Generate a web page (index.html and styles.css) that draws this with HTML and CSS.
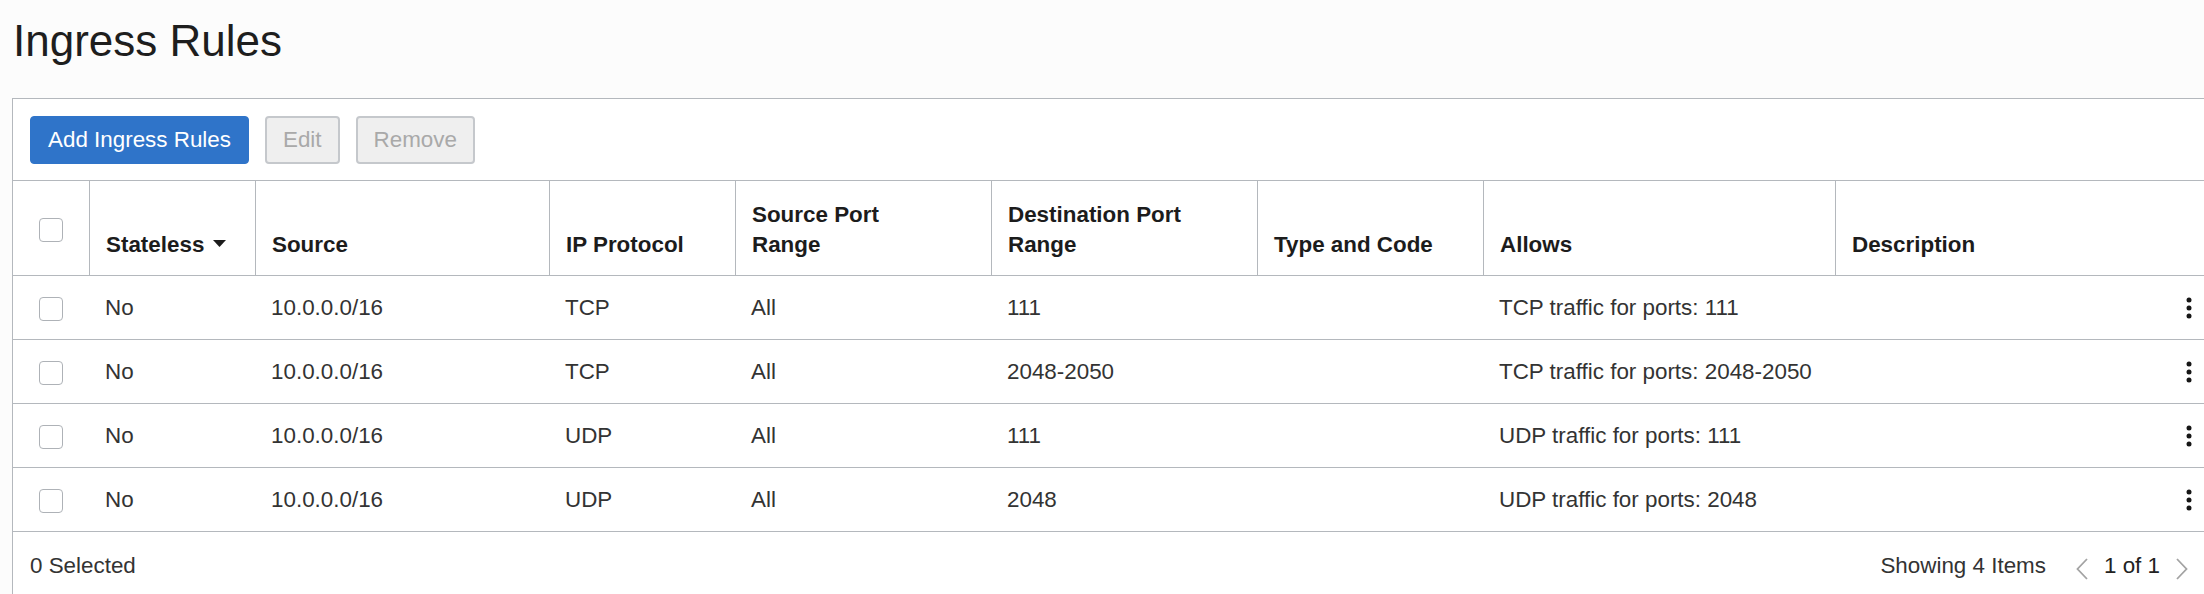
FILE: index.html
```html
<!DOCTYPE html>
<html lang="en">
<head>
<meta charset="utf-8">
<title>Ingress Rules</title>
<link rel="stylesheet" href="styles.css">
</head>
<body>
<div class="page">
  <h1 class="title">Ingress Rules</h1>
  <section class="panel">
    <div class="toolbar">
      <button class="btn btn-primary" type="button">Add Ingress Rules</button>
      <button class="btn btn-disabled" type="button" disabled>Edit</button>
      <button class="btn btn-disabled" type="button" disabled>Remove</button>
    </div>
    <div class="table" role="table">
      <div class="row head" role="row">
        <div class="th th-check" role="columnheader"><span class="checkbox"></span></div>
        <div class="th divided" role="columnheader"><span>Stateless<svg class="sort" width="13" height="7" viewBox="0 0 13 7"><polygon points="0,0 13,0 6.5,7"/></svg></span></div>
        <div class="th divided" role="columnheader">Source</div>
        <div class="th divided" role="columnheader">IP Protocol</div>
        <div class="th divided" role="columnheader"><span>Source Port<br>Range</span></div>
        <div class="th divided" role="columnheader"><span>Destination Port<br>Range</span></div>
        <div class="th divided" role="columnheader">Type and Code</div>
        <div class="th divided" role="columnheader">Allows</div>
        <div class="th divided" role="columnheader">Description</div>
        <div class="th" role="columnheader"></div>
      </div>

      <div class="row" role="row">
        <div class="td td-check"><span class="checkbox"></span></div>
        <div class="td">No</div>
        <div class="td">10.0.0.0/16</div>
        <div class="td">TCP</div>
        <div class="td">All</div>
        <div class="td">111</div>
        <div class="td"></div>
        <div class="td">TCP traffic for ports: 111</div>
        <div class="td"></div>
        <div class="td td-actions"><svg class="kebab" width="6" height="22" viewBox="0 0 6 22"><circle cx="3" cy="3" r="2.5"/><circle cx="3" cy="11" r="2.5"/><circle cx="3" cy="19" r="2.5"/></svg></div>
      </div>

      <div class="row" role="row">
        <div class="td td-check"><span class="checkbox"></span></div>
        <div class="td">No</div>
        <div class="td">10.0.0.0/16</div>
        <div class="td">TCP</div>
        <div class="td">All</div>
        <div class="td">2048-2050</div>
        <div class="td"></div>
        <div class="td">TCP traffic for ports: 2048-2050</div>
        <div class="td"></div>
        <div class="td td-actions"><svg class="kebab" width="6" height="22" viewBox="0 0 6 22"><circle cx="3" cy="3" r="2.5"/><circle cx="3" cy="11" r="2.5"/><circle cx="3" cy="19" r="2.5"/></svg></div>
      </div>

      <div class="row" role="row">
        <div class="td td-check"><span class="checkbox"></span></div>
        <div class="td">No</div>
        <div class="td">10.0.0.0/16</div>
        <div class="td">UDP</div>
        <div class="td">All</div>
        <div class="td">111</div>
        <div class="td"></div>
        <div class="td">UDP traffic for ports: 111</div>
        <div class="td"></div>
        <div class="td td-actions"><svg class="kebab" width="6" height="22" viewBox="0 0 6 22"><circle cx="3" cy="3" r="2.5"/><circle cx="3" cy="11" r="2.5"/><circle cx="3" cy="19" r="2.5"/></svg></div>
      </div>

      <div class="row" role="row">
        <div class="td td-check"><span class="checkbox"></span></div>
        <div class="td">No</div>
        <div class="td">10.0.0.0/16</div>
        <div class="td">UDP</div>
        <div class="td">All</div>
        <div class="td">2048</div>
        <div class="td"></div>
        <div class="td">UDP traffic for ports: 2048</div>
        <div class="td"></div>
        <div class="td td-actions"><svg class="kebab" width="6" height="22" viewBox="0 0 6 22"><circle cx="3" cy="3" r="2.5"/><circle cx="3" cy="11" r="2.5"/><circle cx="3" cy="19" r="2.5"/></svg></div>
      </div>
    </div>
    <div class="footer">
      <span class="selected">0 Selected</span>
      <div class="pager">
        <span class="count">Showing 4 Items</span>
        <svg class="chev" width="12" height="22" viewBox="0 0 12 22"><polyline points="11,1 1.5,11 11,21"/></svg>
        <span class="pages">1 of 1</span>
        <svg class="chev" width="12" height="22" viewBox="0 0 12 22"><polyline points="1,1 10.5,11 1,21"/></svg>
      </div>
    </div>
  </section>
</div>
</body>
</html>
```

FILE: styles.css
```css
* {
  box-sizing: border-box;
}

html, body {
  margin: 0;
  padding: 0;
}

body {
  background: #fcfcfc;
  font-family: "Liberation Sans", Arial, Helvetica, sans-serif;
  color: #333333;
  overflow: hidden;
}

.page {
  padding-top: 15px;
}

.title {
  margin: 0 0 31px 13px;
  font-size: 44px;
  line-height: 52px;
  font-weight: 400;
  color: #1e1e1e;
}

.panel {
  margin-left: 12px;
  background: #ffffff;
  border: 1px solid #b4b8bd;
  border-right: none;
}

.toolbar {
  display: flex;
  gap: 16px;
  padding: 17px 17px 16px;
  border-bottom: 1px solid #b4b8bd;
}

.btn {
  height: 48px;
  padding: 0 17px;
  font-family: inherit;
  font-size: 22.4px;
  border-radius: 4px;
  border: 1px solid transparent;
  line-height: 1;
}

.btn-primary {
  background: #2f74c9;
  border-color: #2f74c9;
  color: #ffffff;
}

.btn-disabled {
  background: #efefef;
  border: 2px solid #c5c8cc;
  padding: 0 16px;
  color: #a9a9a9;
}

.row {
  display: grid;
  grid-template-columns: 76px 166px 294px 186px 256px 266px 226px 352px 1fr 60px;
  height: 64px;
  border-bottom: 1px solid #b4b8bd;
  font-size: 22.4px;
}

.row.head {
  height: 95px;
}

.th {
  display: flex;
  align-items: flex-end;
  padding: 0 16px 15px;
  font-weight: 700;
  line-height: 30px;
  color: #1c1c1c;
}

.th.divided {
  border-left: 1px solid #b4b8bd;
}

.th-check {
  align-items: center;
  justify-content: center;
  padding: 3px 0 0;
}

.sort {
  margin-left: 9px;
  vertical-align: 5px;
  fill: #1c1c1c;
}

.td {
  display: flex;
  align-items: center;
  padding: 0 16px;
  white-space: nowrap;
}

.td-check {
  justify-content: center;
  padding: 2px 0 0;
}

.checkbox {
  display: block;
  width: 24px;
  height: 24px;
  border: 1.5px solid #aeb2b7;
  border-radius: 4px;
  background: #ffffff;
}

.td-actions {
  justify-content: flex-end;
  padding: 0 12px 0 0;
}

.kebab {
  fill: #161616;
}

.footer {
  display: flex;
  align-items: center;
  justify-content: space-between;
  height: 63px;
  padding: 5px 16px 0 17px;
  font-size: 22.4px;
  color: #333333;
}

.pager {
  display: flex;
  align-items: center;
}

.count {
  margin-right: 30px;
}

.pages {
  margin: 0 16px;
  color: #222222;
}

.chev {
  fill: none;
  stroke: #a3a3a3;
  stroke-width: 1.8;
  margin-top: 5px;
}
```
